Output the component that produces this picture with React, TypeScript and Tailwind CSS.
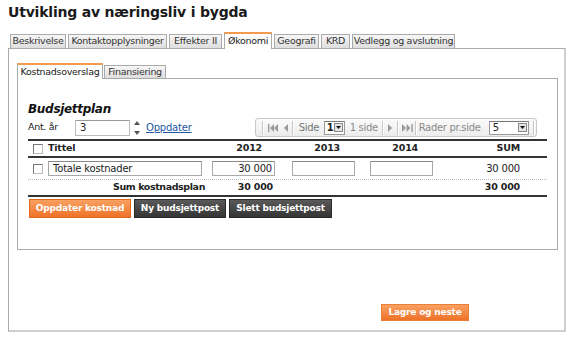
import React from "react";

const tabs = [
  { label: "Beskrivelse", w: "w-[56px]" },
  { label: "Kontaktopplysninger", w: "w-[99px]" },
  { label: "Effekter II", w: "w-[53px]" },
  { label: "Økonomi", w: "w-[48px]", active: true },
  { label: "Geografi", w: "w-[45px]" },
  { label: "KRD", w: "w-[29px]" },
  { label: "Vedlegg og avslutning", w: "w-[103px]" },
];

function Tab({ label, w, active }: { label: string; w: string; active?: boolean }) {
  if (active) {
    return (
      <div
        className={`${w} h-[17px] -mb-px relative z-10 flex items-center justify-center bg-white border border-b-0 border-[#aaa] border-t-2 border-t-[#f39a4e] text-[9.5px] tracking-[-0.3px] text-[#222] whitespace-nowrap`}
      >
        {label}
      </div>
    );
  }
  return (
    <div
      className={`${w} h-[14px] flex items-center justify-center bg-linear-to-b from-[#f7f7f7] to-[#dedede] border border-b-0 border-[#aaa] text-[9.5px] tracking-[-0.3px] text-[#333] whitespace-nowrap`}
    >
      {label}
    </div>
  );
}

function Checkbox() {
  return <div className="w-[10px] h-[10px] bg-white border border-[#777] border-b-[#bbb] border-r-[#bbb]" />;
}

function Sep() {
  return <div className="w-[2px] h-[14px] border-l border-[#c8c8c8] border-r border-r-white" />;
}

function DropBtn() {
  return (
    <div className="w-[9px] h-[9px] bg-[#e4e4e4] border border-[#888] flex items-center justify-center">
      <svg width="5" height="3" viewBox="0 0 5 3">
        <path d="M0 0H5L2.5 3Z" fill="#111" />
      </svg>
    </div>
  );
}

function Pager() {
  return (
    <div className="w-[282px] h-[19px] rounded-[3px] border border-[#c8c8c8] bg-linear-to-b from-[#fbfbfb] to-[#ececec] flex items-center text-[10px] text-[#8a8a8a] tracking-[-0.3px]">
      <div className="ml-[6px]"><Sep /></div>
      {/* first */}
      <svg className="ml-[4px]" width="10" height="8" viewBox="0 0 10 8">
        <rect x="0" y="0" width="1.4" height="8" fill="#9a9a9a" />
        <path d="M6 0V8L2 4Z" fill="#9a9a9a" />
        <path d="M10 0V8L6 4Z" fill="#9a9a9a" />
      </svg>
      {/* prev */}
      <svg className="ml-[5px]" width="5" height="8" viewBox="0 0 5 8">
        <path d="M5 0V8L1 4Z" fill="#9a9a9a" />
      </svg>
      <div className="ml-[4px]"><Sep /></div>
      <span className="ml-[5px] w-[22px] text-[#777]">Side</span>
      <div className="ml-[3px] w-[21px] h-[14px] bg-white border border-[#999] border-t-[#777] flex items-center justify-between pl-[2px] pr-[1px]">
        <span className="font-bold text-[#222]">1</span>
        <DropBtn />
      </div>
      <span className="ml-[5px] w-[29px] whitespace-nowrap">1 side</span>
      <div className="ml-[3px]"><Sep /></div>
      {/* next */}
      <svg className="ml-[4px]" width="5" height="8" viewBox="0 0 5 8">
        <path d="M0 0V8L4 4Z" fill="#9a9a9a" />
      </svg>
      <div className="ml-[4px]"><Sep /></div>
      {/* last */}
      <svg className="ml-[3px]" width="11" height="8" viewBox="0 0 11 8">
        <path d="M0 0V8L4 4Z" fill="#9a9a9a" />
        <path d="M4.5 0V8L8.5 4Z" fill="#9a9a9a" />
        <rect x="9.4" y="0" width="1.4" height="8" fill="#9a9a9a" />
      </svg>
      <div className="ml-[2px]"><Sep /></div>
      <span className="ml-[2px] w-[64px] whitespace-nowrap">Rader pr.side</span>
      <div className="ml-[6px] w-[40px] h-[14px] bg-white border border-[#999] border-t-[#777] flex items-center justify-between pl-[3px] pr-[1px]">
        <span className="text-[#222]">5</span>
        <DropBtn />
      </div>
      <div className="ml-[4px]"><Sep /></div>
    </div>
  );
}

function Cell({ className = "" }: { className?: string }) {
  return <div className={`h-[15px] bg-white border border-[#a8a8a8] border-t-[#888] ${className}`} />;
}

export default function App() {
  return (
    <div className="w-[582px] h-[342px] bg-white font-['DejaVu_Sans',sans-serif] text-[#222] overflow-hidden">
      <h1 className="ml-[8px] pt-[3px] text-[14px] leading-[18px] font-bold text-[#1a1a1a] tracking-[-0.2px]">
        Utvikling av næringsliv i bygda
      </h1>

      {/* Main tabs */}
      <div className="ml-[10px] mt-[11px] flex items-end gap-[2px]">
        {tabs.map((t) => (
          <Tab key={t.label} {...t} />
        ))}
      </div>

      {/* Outer panel */}
      <div className="ml-[8px] w-[558px] h-[284px] border-l border-t border-[#aaa] border-r-2 border-b-2 border-r-[#cfcfcf] border-b-[#cfcfcf]">
        {/* Inner tabs */}
        <div className="ml-[8px] mt-[14px] flex items-end gap-px">
          <div className="w-[86px] h-[16px] -mb-px relative z-10 flex items-center justify-center bg-white border border-b-0 border-[#aaa] border-t-2 border-t-[#f39a4e] text-[9.5px] whitespace-nowrap tracking-[-0.3px]">
            Kostnadsoverslag
          </div>
          <div className="w-[62px] h-[13px] flex items-center justify-center bg-linear-to-b from-[#f7f7f7] to-[#dedede] border border-b-0 border-[#aaa] text-[9.5px] text-[#333] whitespace-nowrap tracking-[-0.3px]">
            Finansiering
          </div>
        </div>

        {/* Inner panel */}
        <div className="ml-[8px] w-[541px] h-[172px] border border-[#aaa] pl-[10px]">
          <div className="mt-[23px] text-[12px] leading-[15px] font-bold italic text-[#111] tracking-[-0.3px]">
            Budsjettplan
          </div>

          <div className="w-[519px] h-[21px] flex items-center">
            <span className="w-[47px] text-[9.5px] text-[#222] tracking-[-0.3px]">Ant. år</span>
            <div className="w-[55px] h-[16px] bg-white border border-[#bbb] border-t-[#999] text-[10px] leading-[14px] pl-[4px]">
              3
            </div>
            <div className="ml-[4px] w-[6px] flex flex-col justify-between h-[14px]">
              <svg width="6" height="4" viewBox="0 0 6 4"><path d="M0 4H6L3 0Z" fill="#555" /></svg>
              <svg width="6" height="4" viewBox="0 0 6 4"><path d="M0 0H6L3 4Z" fill="#555" /></svg>
            </div>
            <a href="#" className="ml-[6px] text-[10px] text-[#2255a4] underline tracking-[-0.2px]">
              Oppdater
            </a>
            <div className="ml-[63px]">
              <Pager />
            </div>
          </div>

          {/* Table */}
          <div className="mt-[1px] w-[519px] border-t-2 border-[#333] text-[9.5px] tracking-[-0.2px]">
            <div className="h-[17px] flex items-center font-bold border-b-2 border-[#333]">
              <div className="w-[18px] pl-[5px]"><Checkbox /></div>
              <div className="w-[161px] pl-[2px]">Tittel</div>
              <div className="w-[80px] pr-[25px] text-right">2012</div>
              <div className="w-[78px] pr-[25px] text-right">2013</div>
              <div className="w-[78px] pr-[25px] text-right">2014</div>
              <div className="w-[104px] pr-[27px] text-right">SUM</div>
            </div>

            <div className="h-[22px] flex items-center border-b border-dotted border-[#bbb]">
              <div className="w-[18px] pl-[5px]"><Checkbox /></div>
              <div className="w-[161px] pl-[2px]">
                <div className="w-[154px] h-[15px] bg-white border border-[#a8a8a8] border-t-[#888] pl-[4px] leading-[13px] text-[10px]">
                  Totale kostnader
                </div>
              </div>
              <div className="w-[80px] pl-[5px]">
                <div className="w-[63px] h-[15px] bg-white border border-[#a8a8a8] border-t-[#888] pr-[2px] text-right leading-[13px] text-[10px]">
                  30 000
                </div>
              </div>
              <div className="w-[78px] pl-[5px]"><Cell className="w-[63px]" /></div>
              <div className="w-[78px] pl-[5px]"><Cell className="w-[63px]" /></div>
              <div className="w-[104px] pr-[27px] text-right text-[10px]">30 000</div>
            </div>

            <div className="h-[17px] flex items-center font-bold border-b-2 border-[#333]">
              <div className="w-[179px] pr-[2px] text-right tracking-[-0.4px]">Sum kostnadsplan</div>
              <div className="w-[80px] pr-[14px] text-right">30 000</div>
              <div className="w-[78px]" />
              <div className="w-[78px]" />
              <div className="w-[104px] pr-[27px] text-right">30 000</div>
            </div>
          </div>

          <div className="mt-[2px] ml-[1px] flex gap-[3px] text-[9px] font-bold text-white tracking-[-0.2px]">
            <button className="w-[102px] h-[19px] bg-linear-to-b from-[#f9a060] to-[#ee7226] border border-[#e06a20]">
              Oppdater kostnad
            </button>
            <button className="w-[92px] h-[19px] bg-linear-to-b from-[#5a5a5a] to-[#353535] border border-[#2a2a2a]">
              Ny budsjettpost
            </button>
            <button className="w-[103px] h-[19px] bg-linear-to-b from-[#5a5a5a] to-[#353535] border border-[#2a2a2a]">
              Slett budsjettpost
            </button>
          </div>
        </div>

        <div className="ml-[372px] mt-[48px]">
          <button className="w-[88px] h-[17px] bg-linear-to-b from-[#f9a060] to-[#ee7226] border border-[#e8803a] text-[9px] font-bold text-white tracking-[-0.2px]">
            Lagre og neste
          </button>
        </div>
      </div>
    </div>
  );
}
